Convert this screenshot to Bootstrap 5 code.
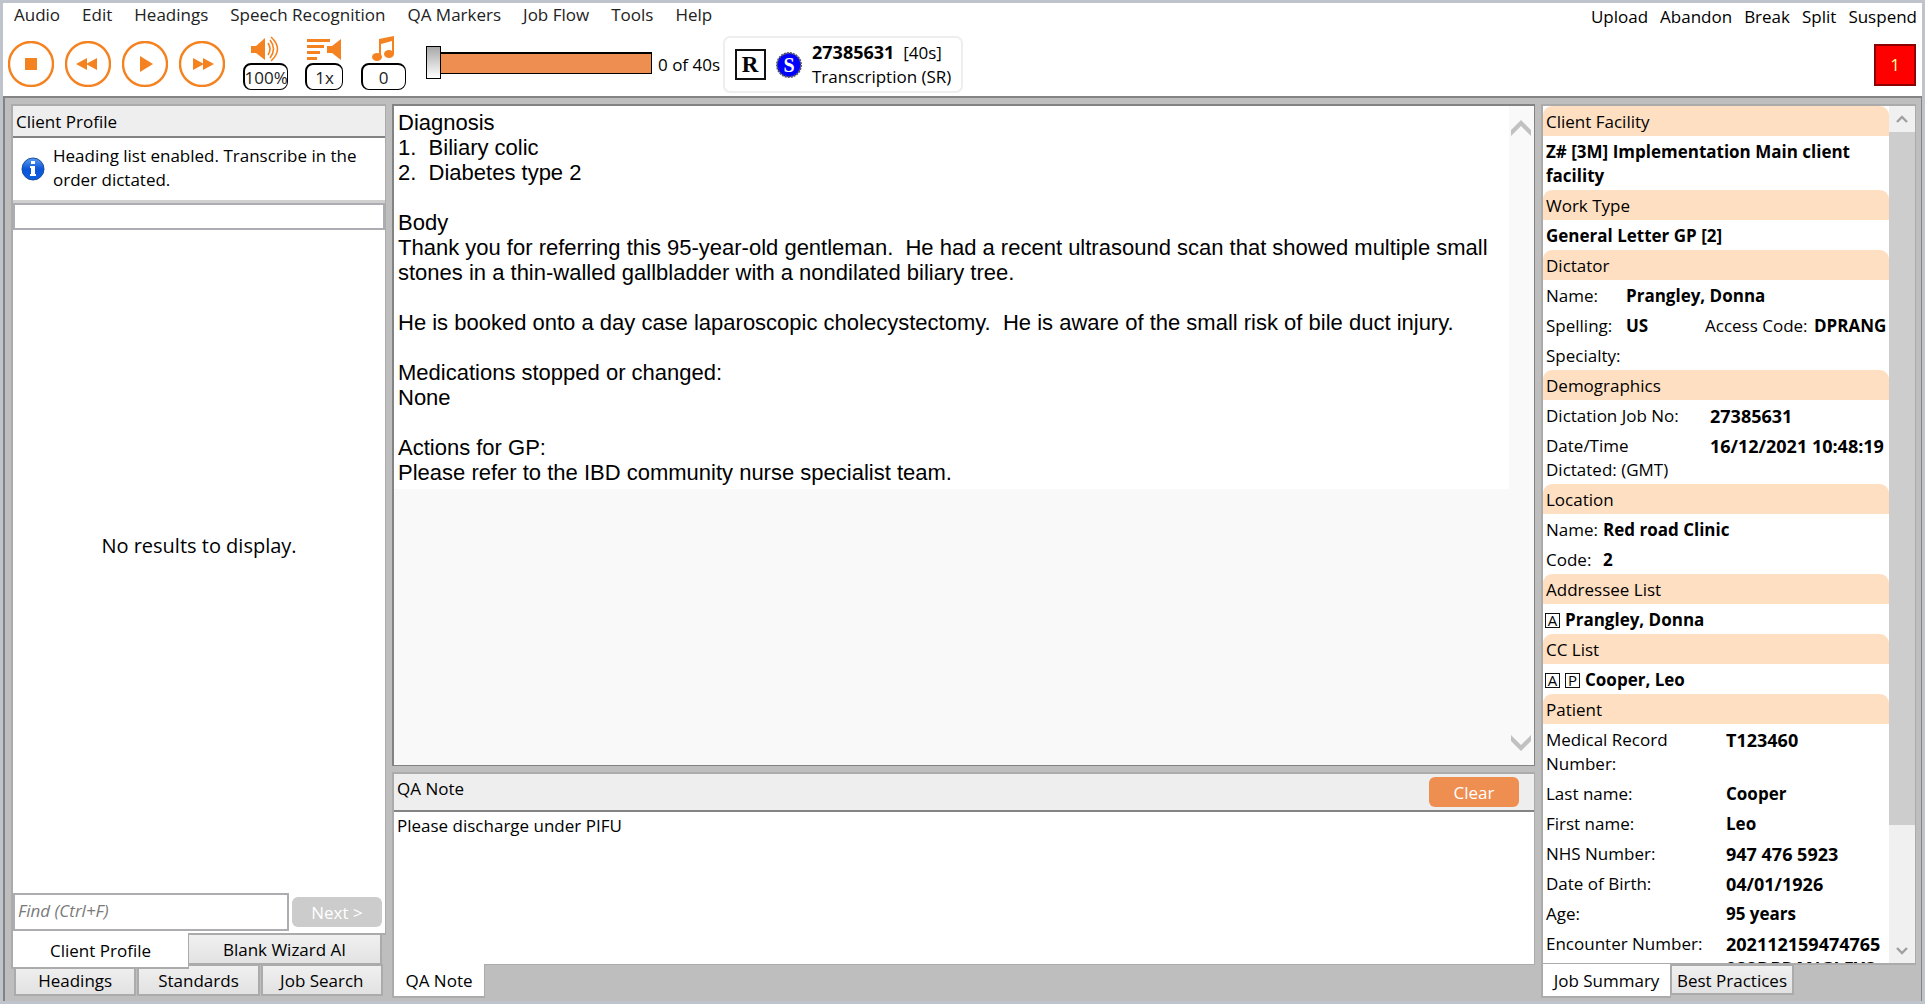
<!DOCTYPE html>
<html lang="en">
<head>
<meta charset="utf-8">
<meta name="viewport" content="width=device-width, initial-scale=1">
<title>Transcription editor</title>
<link href="https://cdn.jsdelivr.net/npm/bootstrap@5.3.0/dist/css/bootstrap.min.css" rel="stylesheet">
<style>
  :root { --edge:#ababab; --dark:#838383; --accent:#ee8e50; --peach:#ffdfc2; --icon:#f58220; }
  body { font-family:"Open Sans",sans-serif; font-size:17px; line-height:24px; color:#000; background:#bfc4cc; }
  .shell { height:100vh; padding:3px; }
  .topbar { background:#fff; height:93px; flex:none; }
  .menurow { height:26px; }
  .menu { gap:22px; padding-left:11px; }
  .menu a { color:#222; text-decoration:none; }
  .actions { gap:12px; padding:2px 5px 0 0; }
  .actions a { color:#000; text-decoration:none; }
  .tools { padding:7px 6px 0 5px; height:67px; }
  .rounds { gap:11px; padding-top:5px; }
  .round { width:46px; height:46px; padding:0; border:0; background:none; display:block; }
  .round svg, .tool svg { display:block; }
  .round circle { fill:none; stroke:var(--icon); stroke-width:2.4px; }
  .levels { gap:17px; margin-left:17px; }
  .tool { display:flex; flex-direction:column; align-items:center; width:46px; }
  .tool input { width:45px; height:27px; border:2px solid #000; border-right-width:1px; border-bottom-width:1px; border-radius:8px; padding:0; text-align:center; background:#fff; color:#222; }
  .tool.narrow { width:38px; }
  .tool.narrow input { width:38px; }
  .seek { -webkit-appearance:none; appearance:none; width:226px; height:34px; margin:10px 0 0 20px; background:none; }
  .seek::-webkit-slider-runnable-track { height:22px; background:var(--accent); border:1px solid #000; border-top-width:2px; }
  .seek::-webkit-slider-thumb { -webkit-appearance:none; width:15px; height:33px; margin:-8px 0 0 -1px; border:1px solid #000; border-radius:0; background:linear-gradient(#a8a8a8,#fff); }
  .elapsed { padding-top:17px; width:65px; margin-left:6px; white-space:nowrap; }
  .jobbox { border:2px solid #eee; border-radius:7px; height:57px; padding:0 10px; gap:10px; }
  .numbox { width:42px; height:42px; background:#f00; border:2px solid #8b0000; color:#ff9; padding:0; margin-top:8px; }
  .work { background:#bebebe; border:2px solid var(--dark); border-right-width:1px; border-bottom:0; padding:6px 5px 4px 6px; display:grid; grid-template-columns:375px minmax(0,1fr) 375px; gap:5px 6px; flex:1; min-height:0; }
  .work > section { min-height:0; min-width:0; }
  .pane { background:#fff; border:2px solid var(--edge); border-right-width:1px; min-height:0; }
  .panehead { background:#eee; border-bottom:2px solid var(--dark); padding:4px 3px 2px; height:32px; font-size:17px; line-height:24px; margin:0; font-weight:400; flex:none; }
  .info { height:65px; border-bottom:3px solid #d0d0d0; padding:6px 8px 0; gap:8px; flex:none; }
  .info svg { margin-top:13px; flex:none; }
  .boxed { border:2px solid #abadb3; background:#fff; padding:0 3px; width:100%; }
  .hfilter { height:27px; display:block; flex:none; }
  .empty { font-size:20px; padding-bottom:32px; }
  .findrow { gap:3px; padding:0 3px 2px 0; }
  .find { height:38px; font-style:italic; padding-bottom:4px; min-width:0; flex:1; }
  .find::placeholder { color:#7a7a7a; opacity:1; }
  .pill { height:30px; width:90px; padding:2px 0 0; border:0; border-radius:6px; line-height:24px; font-size:17px; color:#fff; flex:none; }
  .pill.off { background:#ccc; color:#fff; opacity:1; }
  .pill.on { background:var(--accent); margin-right:12px; }
  .tabbtn { border:2px solid var(--edge); background:linear-gradient(#f0f0f0,#e2e2e2); padding:2px 0 0; height:31px; color:#000; line-height:24px; }
  .tabbtn.current { background:#fff; height:36px; border-top:0; border-right-width:1px; position:relative; z-index:1; flex:none; }
  .lefttabs { margin-top:-2px; height:64px; }
  .lefttabs .upper { height:31px; }
  .lefttabs .current { width:178px; }
  .lefttabs .other { flex:1; margin:0 4px 0 -2px; height:32px; }
  .lefttabs .lower { padding:0 3px; gap:1px; }
  .lefttabs .lower .tabbtn { flex:1 1 0; height:32px; }
  .editor { border:2px solid var(--dark); border-right-width:1px; border-bottom-width:1px; background:#f9f9f9; flex:1; min-height:0; }
  .letter { background:#fff; font-family:"Liberation Sans",Arial,sans-serif; font-size:22px; line-height:25px; padding:4px 4px; white-space:pre-wrap; flex:1; align-self:flex-start; outline:0; }
  .escroll { width:25px; padding:14px 2px; }
  .note { height:193px; margin-top:6px; border-bottom-width:1px; flex:none; }
  .note .panehead { height:38px; padding:3px; }
  .note textarea { resize:none; border:0; width:100%; padding:2px 3px; flex:1; display:block; outline:0; }
  .under { height:33px; margin-top:-1px; flex:none; }
  .under .current { height:34px; }
  .notetab { width:93px; }
  .rpane { flex:1; border-bottom-width:2px; overflow:hidden; }
  .summary { overflow:hidden; min-width:0; flex:1; }
  .sect { background:var(--peach); border-radius:9px 9px 0 0; padding:4px 3px 2px; font-size:17px; line-height:24px; margin:0; font-weight:400; }
  .fact { padding:4px 3px 2px; display:flex; margin:0; }
  .fact dt { font-weight:400; flex:none; }
  .fact dd { font-weight:700; margin:0; }
  .fact .num, .num { font-size:18px; }
  .w-name dt { width:80px; } .w-loc dt { width:57px; } .w-job dt { width:164px; } .w-pat dt { width:180px; padding-right:30px; }
  .w-pat .wide { padding-right:0; white-space:nowrap; }
  .w-name .spell { width:79px; flex:none; } .w-name .code { width:109px; }
  .one { white-space:nowrap; }
  .people { padding-left:2px; align-items:center; gap:5px; }
  .tag { border:1px solid #111; width:15px; height:15px; font-size:15px; line-height:13px; text-align:center; flex:none; }
  .bar { width:26px; background:#f0f0f0; flex:none; }
  .arrow { height:26px; display:flex; align-items:center; justify-content:center; flex:none; }
  .thumb { background:#cdcdcd; flex:693 0 0; } .rest { flex:112 0 0; }
  .under .summarytab { width:130px; } .under .best { width:124px; margin-left:-1px; height:31px; }
</style>
</head>
<body>
<div class="shell d-flex flex-column">
  <header class="topbar">
    <div class="menurow d-flex justify-content-between">
      <nav class="menu d-flex" aria-label="Menu"><a href="#">Audio</a><a href="#">Edit</a><a href="#">Headings</a><a href="#">Speech Recognition</a><a href="#">QA Markers</a><a href="#">Job Flow</a><a href="#">Tools</a><a href="#">Help</a></nav>
      <nav class="actions d-flex" aria-label="Job actions"><a href="#">Upload</a><a href="#">Abandon</a><a href="#">Break</a><a href="#">Split</a><a href="#">Suspend</a></nav>
    </div>
    <div class="tools d-flex align-items-start">
      <div class="rounds d-flex">
        <button class="round" aria-label="Stop"><svg width="46" height="46" viewBox="0 0 46 46" fill="#f58220"><circle cx="23" cy="23" r="22"/><path d="M17 17h12v12H17z"/></svg></button>
        <button class="round" aria-label="Rewind"><svg width="46" height="46" viewBox="0 0 46 46" fill="#f58220"><circle cx="23" cy="23" r="22"/><path d="M11 23l11-6v12zM21 23l11-6v12z"/></svg></button>
        <button class="round" aria-label="Play"><svg width="46" height="46" viewBox="0 0 46 46" fill="#f58220"><circle cx="23" cy="23" r="22"/><path d="M18 15l13 8-13 8z"/></svg></button>
        <button class="round" aria-label="Fast forward"><svg width="46" height="46" viewBox="0 0 46 46" fill="#f58220"><circle cx="23" cy="23" r="22"/><path d="M14 17l11 6-11 6zM24 17l11 6-11 6z"/></svg></button>
      </div>
      <div class="levels d-flex">
        <div class="tool">
          <svg width="30" height="27" viewBox="0 0 30 27" fill="#f58220"><path d="M1 10h5l9-8v22l-9-7H1z"/><g fill="none" stroke="#f58220" stroke-width="1.6"><path d="M18 7q4 6 0 12M20 4q7 9 0 18M21 1q13 12 0 24"/></g></svg>
          <input type="text" value="100%" aria-label="Volume">
        </div>
        <div class="tool narrow">
          <svg width="36" height="27" viewBox="0 0 36 27" fill="#f58220"><path d="M1 3h23v3H1zM1 9h17v3H1zM1 15h13v3H1zM1 21h10v3H1zM21 10h5l9-7v21l-9-7h-5z"/></svg>
          <input type="text" value="1x" aria-label="Speed">
        </div>
        <div class="tool">
          <svg width="24" height="27" viewBox="0 0 24 27" fill="#f58220"><path d="M8 3l15-3v18h-2V5L10 8v13H8z"/><ellipse cx="6" cy="21" rx="5" ry="4"/><ellipse cx="18" cy="18" rx="5" ry="4"/></svg>
          <input type="text" value="0" aria-label="Tone">
        </div>
      </div>
      <input class="seek" type="range" min="0" max="40" value="0" aria-label="Position">
      <span class="elapsed">0 of 40s</span>
      <div class="jobbox d-flex align-items-center">
        <svg width="31" height="31" viewBox="0 0 31 31"><rect x="1" y="1" width="29" height="29" fill="#fff" stroke="#111" stroke-width="2"/><text x="15" y="23" text-anchor="middle" font-family="Liberation Serif, serif" font-weight="700" font-size="23">R</text></svg>
        <svg width="26" height="26" viewBox="0 0 26 26"><circle cx="13" cy="13" r="12" fill="#00f" stroke="#556" stroke-width="2" stroke-dasharray="2 1"/><text x="13" y="20" text-anchor="middle" font-family="Liberation Serif, serif" font-weight="700" font-size="20" fill="#fff">S</text></svg>
        <div><b class="num">27385631</b>&nbsp; [40s]<br>Transcription (SR)</div>
      </div>
      <button class="numbox ms-auto">1</button>
    </div>
  </header>

  <main class="work">
    <section class="d-flex flex-column">
      <div class="pane d-flex flex-column flex-grow-1">
        <h2 class="panehead">Client Profile</h2>
        <div class="info d-flex"><svg width="24" height="24" viewBox="0 0 24 24"><defs><linearGradient id="ib" x2="0" y2="1"><stop stop-color="#5a9cf0"/><stop offset=".5" stop-color="#0b55d8"/><stop offset="1" stop-color="#0a62e0"/></linearGradient></defs><circle cx="12" cy="12" r="11" fill="url(#ib)" stroke="#1c4c9c"/><path d="M10 4h4v3h-4zM9 9h5v8h1v2H9v-2h1v-6H9z" fill="#fff"/></svg><span>Heading list enabled. Transcribe in the order dictated.</span></div>
        <input class="boxed hfilter" type="text" aria-label="Heading">
        <div class="flex-grow-1 d-flex align-items-center justify-content-center empty">No results to display.</div>
        <div class="d-flex align-items-center findrow"><input class="boxed find" type="text" placeholder="Find (Ctrl+F)" aria-label="Find"><button class="btn pill off" disabled>Next &gt;</button></div>
      </div>
      <div class="lefttabs">
        <div class="d-flex upper"><button class="tabbtn current">Client Profile</button><button class="tabbtn other">Blank Wizard AI</button></div>
        <div class="d-flex lower"><button class="tabbtn">Headings</button><button class="tabbtn">Standards</button><button class="tabbtn">Job Search</button></div>
      </div>
    </section>

    <section class="d-flex flex-column">
      <div class="editor d-flex">
        <div class="letter" contenteditable="true" spellcheck="false" role="textbox" aria-label="Letter">Diagnosis
1.  Biliary colic
2.  Diabetes type 2

Body
Thank you for referring this 95-year-old gentleman.  He had a recent ultrasound scan that showed multiple small stones in a thin-walled gallbladder with a nondilated biliary tree.

He is booked onto a day case laparoscopic cholecystectomy.  He is aware of the small risk of bile duct injury.

Medications stopped or changed:
None

Actions for GP:
Please refer to the IBD community nurse specialist team.</div>
        <div class="escroll d-flex flex-column justify-content-between">
          <svg width="20" height="16" viewBox="0 0 20 16" fill="#c1c1c1"><path d="M0 10L10 0l10 10v6L10 6 0 16z"/></svg>
          <svg width="20" height="16" viewBox="0 0 20 16" fill="#c1c1c1"><path d="M0 6l10 10L20 6V0L10 10 0 0z"/></svg>
        </div>
      </div>
      <div class="pane note d-flex flex-column">
        <div class="panehead d-flex justify-content-between"><label for="qa">QA Note</label><button class="btn pill on">Clear</button></div>
        <textarea id="qa">Please discharge under PIFU</textarea>
      </div>
      <div class="under d-flex"><button class="tabbtn current notetab">QA Note</button></div>
    </section>

    <section class="d-flex flex-column">
      <div class="pane rpane d-flex">
        <div class="summary">
          <h2 class="sect">Client Facility</h2>
          <dl class="fact"><dd>Z# [3M] Implementation Main client facility</dd></dl>
          <h2 class="sect">Work Type</h2>
          <dl class="fact"><dd>General Letter GP [2]</dd></dl>
          <h2 class="sect">Dictator</h2>
          <dl class="fact w-name"><dt>Name:</dt><dd>Prangley, Donna</dd></dl>
          <dl class="fact w-name one"><dt>Spelling:</dt><dd class="spell">US</dd><dt class="code">Access Code:</dt><dd>DPRANG</dd></dl>
          <dl class="fact w-name"><dt>Specialty:</dt><dd></dd></dl>
          <h2 class="sect">Demographics</h2>
          <dl class="fact w-job"><dt>Dictation Job No:</dt><dd class="num">27385631</dd></dl>
          <dl class="fact w-job"><dt>Date/Time<br>Dictated: (GMT)</dt><dd class="one num">16/12/2021 10:48:19</dd></dl>
          <h2 class="sect">Location</h2>
          <dl class="fact w-loc"><dt>Name:</dt><dd>Red road Clinic</dd></dl>
          <dl class="fact w-loc"><dt>Code:</dt><dd>2</dd></dl>
          <h2 class="sect">Addressee List</h2>
          <div class="fact people"><span class="tag">A</span><b>Prangley, Donna</b></div>
          <h2 class="sect">CC List</h2>
          <div class="fact people"><span class="tag">A</span><span class="tag">P</span><b>Cooper, Leo</b></div>
          <h2 class="sect">Patient</h2>
          <dl class="fact w-pat"><dt>Medical Record Number:</dt><dd class="num">T123460</dd></dl>
          <dl class="fact w-pat"><dt>Last name:</dt><dd>Cooper</dd></dl>
          <dl class="fact w-pat"><dt>First name:</dt><dd>Leo</dd></dl>
          <dl class="fact w-pat"><dt>NHS Number:</dt><dd class="num">947 476 5923</dd></dl>
          <dl class="fact w-pat"><dt>Date of Birth:</dt><dd class="num">04/01/1926</dd></dl>
          <dl class="fact w-pat"><dt>Age:</dt><dd>95 years</dd></dl>
          <dl class="fact w-pat"><dt class="wide">Encounter Number:</dt><dd class="num">202112159474765<wbr>082DPRANGLEYS</dd></dl>
        </div>
        <div class="bar d-flex flex-column">
          <div class="arrow"><svg width="12" height="9" viewBox="0 0 12 9" fill="none" stroke="#a0a0a0" stroke-width="2.4"><path d="M1 7l5-5 5 5"/></svg></div>
          <div class="thumb"></div><div class="rest"></div>
          <div class="arrow"><svg width="12" height="9" viewBox="0 0 12 9" fill="none" stroke="#a0a0a0" stroke-width="2.4"><path d="M1 2l5 5 5-5"/></svg></div>
        </div>
      </div>
      <div class="under d-flex"><button class="tabbtn current summarytab">Job Summary</button><button class="tabbtn best">Best Practices</button></div>
    </section>
  </main>
</div>
<script src="https://cdn.jsdelivr.net/npm/bootstrap@5.3.0/dist/js/bootstrap.bundle.min.js"></script>
</body>
</html>
